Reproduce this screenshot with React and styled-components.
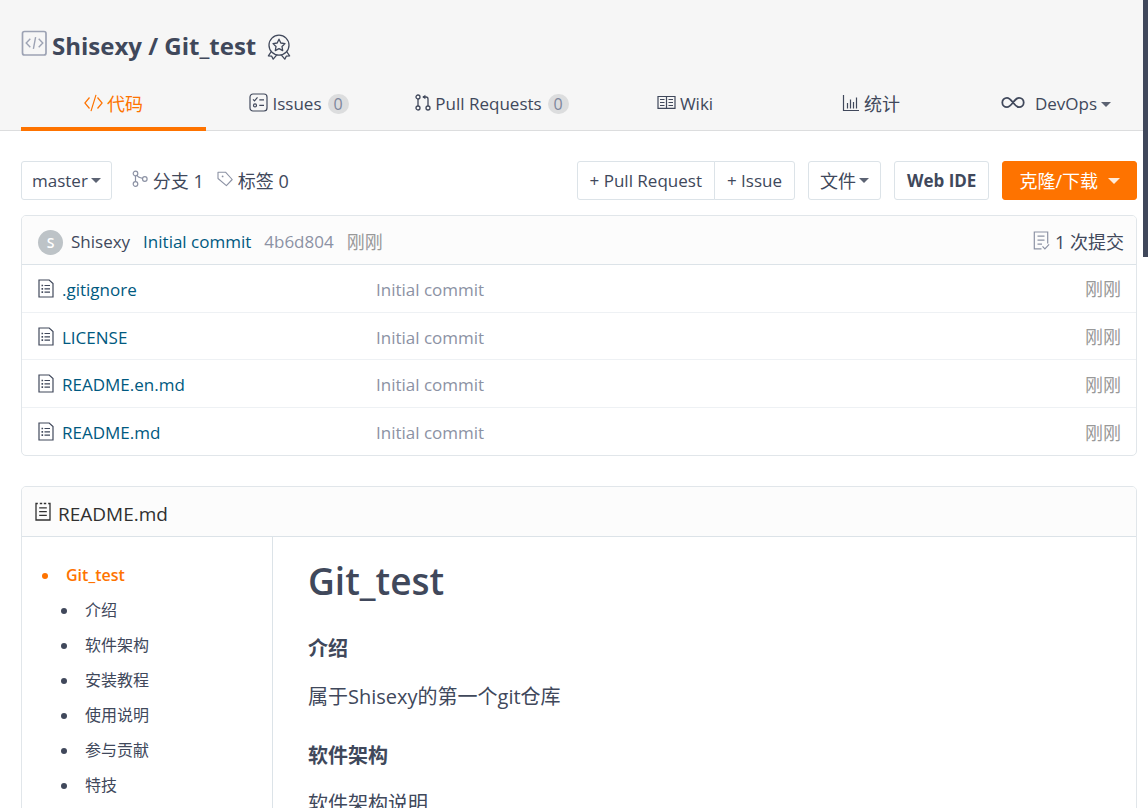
import { styled, createGlobalStyle } from 'styled-components';

const GlobalStyle = createGlobalStyle`
  * {
    box-sizing: border-box;
  }

  html {
    scrollbar-width: none;
  }

  body {
    margin: 0;
    background: #fff;
    color: #40485b;
    font-family: 'Open Sans', 'Noto Sans CJK SC', sans-serif;
    font-size: 17px;
    line-height: 24px;
  }

  a {
    color: inherit;
    text-decoration: none;
  }

  svg {
    display: block;
    flex: none;
    fill: none;
    stroke: currentColor;
  }
`;

const Header = styled.header`
  background: #f6f6f6;
  border-bottom: 1px solid #dcddde;
  padding: 30px 0 0 21px;
`;

const TitleRow = styled.div`
  display: flex;
  align-items: flex-start;
  gap: 5px;
  height: 46px;

  h1 {
    margin: 0 6px 0 0;
    font-size: 24px;
    font-weight: 700;
    line-height: 32px;
  }
`;

const ProjectIcon = styled.span`
  color: #9da3b4;
`;

const Medal = styled.button`
  margin-top: 4px;
  padding: 0;
  border: 0;
  background: none;
  color: #40485b;
`;

const Tabs = styled.nav`
  display: grid;
  grid-template-columns: 185fr 186fr 200fr 186fr 186fr 184fr;
`;

const Tab = styled.a`
  display: flex;
  align-items: center;
  justify-content: center;
  gap: ${({ $gap }) => $gap || 4}px;
  height: ${({ $active }) => ($active ? 55 : 54)}px;
  margin-bottom: ${({ $active }) => ($active ? -1 : 0)}px;
  padding-top: ${({ $active }) => ($active ? 5 : 2)}px;
  border-bottom: ${({ $active }) => ($active ? '4px solid #fe7300' : 'none')};
  color: ${({ $active }) => ($active ? '#fe7300' : 'inherit')};
  font-size: ${({ $cjk }) => ($cjk ? 18 : 17)}px;

  svg {
    margin-bottom: 3px;
  }
`;

const MenuLabel = styled.span`
  display: flex;
  align-items: center;
  gap: 4px;
`;

const Count = styled.span`
  min-width: 21px;
  height: 20px;
  margin-left: 2px;
  border-radius: 10px;
  background: #dcddde;
  color: #7d869c;
  font-size: 16px;
  line-height: 20px;
  text-align: center;
`;

const Caret = styled.i`
  border: ${({ $size }) => $size || 5}px solid transparent;
  border-top-color: currentColor;
  border-bottom: 0;
  opacity: 0.85;
`;

const Main = styled.main`
  padding: 30px 11px 0 21px;
`;

const Toolbar = styled.div`
  display: flex;
  align-items: center;
  gap: 13px;
`;

const Button = styled.button`
  display: flex;
  align-items: center;
  justify-content: center;
  gap: ${({ $primary }) => ($primary ? 10 : 3)}px;
  height: 39px;
  padding: 0 ${({ $pad }) => $pad || 12}px;
  border: 1px solid ${({ $primary }) => ($primary ? '#fe7300' : '#dce3e8')};
  border-radius: 3px;
  background: ${({ $primary }) => ($primary ? '#fe7300' : '#fff')};
  color: ${({ $primary }) => ($primary ? '#fff' : '#40485b')};
  font: inherit;
  font-size: ${({ $cjk }) => ($cjk ? 18 : 17)}px;
  font-weight: ${({ $bold }) => ($bold ? 700 : 400)};
  white-space: nowrap;
`;

const ButtonGroup = styled.div`
  display: flex;

  ${Button} + ${Button} {
    margin-left: -1px;
  }

  ${Button}:first-child {
    border-radius: 3px 0 0 3px;
  }

  ${Button}:last-child {
    border-radius: 0 3px 3px 0;
  }
`;

const RefLinks = styled.div`
  display: flex;
  gap: 13px;
  margin: 0 auto 0 7px;
  font-size: 18px;

  a {
    display: flex;
    align-items: center;
    gap: 5px;
  }

  svg {
    margin-bottom: 3px;
    color: #8c92a4;
  }
`;

const Panel = styled.section`
  margin-top: ${({ $top }) => $top}px;
  border: 1px solid #e1e6ea;
  border-radius: 5px;
  overflow: hidden;
`;

const CommitBar = styled.div`
  display: flex;
  align-items: center;
  gap: 13px;
  height: 49px;
  padding: 4px 12px 0 16px;
  background: #fcfcfc;
  border-bottom: 1px solid #dce3e8;
`;

const Author = styled.a`
  display: flex;
  align-items: center;
  gap: 8px;
`;

const Avatar = styled.span`
  width: 25px;
  height: 25px;
  border-radius: 50%;
  background: #bdc3c7;
  color: #fff;
  font-size: 14px;
  font-weight: 600;
  line-height: 25px;
  text-align: center;
`;

const CommitLink = styled.a`
  color: ${({ $muted }) => ($muted ? '#8c92a4' : '#005980')};
`;

const Time = styled.span`
  color: #999;
  font-size: 18px;
`;

const CommitCount = styled.a`
  display: flex;
  align-items: center;
  gap: 5px;
  margin-left: auto;
  font-size: 18px;

  svg {
    margin-bottom: 4px;
    color: #8c92a4;
  }
`;

const FileTable = styled.table`
  width: 100%;
  height: 190px;
  border-collapse: collapse;

  td {
    padding: 3px 15px 0 0;
    color: #8c92a4;
  }

  td:first-child {
    width: 354px;
    padding-left: 16px;
  }

  td:last-child {
    text-align: right;
  }

  tr + tr td {
    border-top: 1px solid #eef1f4;
  }
`;

const FileLink = styled.a`
  display: flex;
  align-items: center;
  gap: 8px;
  color: #005980;

  svg {
    margin-bottom: 3px;
    color: #40485b;
  }
`;

const ReadmeHead = styled.div`
  display: flex;
  align-items: center;
  gap: 7px;
  height: 50px;
  padding: 4px 13px 0;
  background: #fcfcfc;
  border-bottom: 1px solid #dce3e8;
  color: #303030;
  font-size: 19px;

  svg {
    margin-bottom: 4px;
  }
`;

const ReadmeBody = styled.div`
  display: flex;
`;

const Toc = styled.ul`
  width: 251px;
  margin: 0;
  padding: 21px 0 22px 44px;
  border-right: 1px solid #dce3e8;
  color: #fe7300;
  font-size: 16px;
  line-height: 35px;

  > li > a {
    font-weight: 600;
  }

  ul {
    margin: 0;
    padding-left: 19px;
    color: #40485b;
  }

  li {
    list-style: none;
  }

  a {
    display: flex;
    align-items: center;
    gap: 18px;
    margin-left: -24px;
  }

  a::before {
    content: '';
    width: 6px;
    height: 6px;
    border-radius: 50%;
    background: currentColor;
  }
`;

const Article = styled.article`
  flex: 1;
  padding: 18px 35px 30px;
  font-size: 20px;
  line-height: 32px;

  h1 {
    margin: 0 0 26px;
    font-size: 37px;
    font-weight: 600;
    line-height: 52px;
  }

  h4 {
    margin: 0 0 16px;
    font-size: 20px;
    font-weight: 700;
  }

  p {
    margin: 0 0 27px;
  }
`;

const SideDock = styled.aside`
  position: fixed;
  top: 0;
  right: 0;
  width: 5px;
  height: 257px;
  background: #40485b;
`;

function ProjectGlyph() {
  return (
    <svg width="26" height="26" viewBox="0 0 26 26" strokeWidth="1.7">
      <rect x="1.5" y="1.5" width="23.5" height="23.5" rx="2" />
      <path d="M9.3 8.7 5.2 13l4.1 4.3M17.7 8.7l4.1 4.3-4.1 4.3M14.6 7.2l-2.2 11.6" strokeWidth="1.4" />
    </svg>
  );
}

function MedalGlyph() {
  return (
    <svg width="24" height="27" viewBox="0 0 24 27" strokeWidth="1.3" strokeLinejoin="round">
      <circle cx="12" cy="11.2" r="10" />
      <path d="m12 5.2 1.8 3.8 4.2.6-3 2.9.7 4.1-3.7-2-3.7 2 .7-4.1-3-2.9 4.2-.6z" />
      <path d="m4 18-2.6 3.9 3.3.3 1.5 2.9 3.4-4M20 18l2.6 3.9-3.3.3-1.5 2.9-3.4-4" />
    </svg>
  );
}

function CodeGlyph() {
  return (
    <svg width="19" height="18" viewBox="0 0 19 18" strokeWidth="1.2">
      <path d="M5.5 3.5.9 9l4.6 5.5M13.5 3.5 18.1 9l-4.6 5.5M12 .8 7 17.2" />
    </svg>
  );
}

function IssuesGlyph() {
  return (
    <svg width="19" height="19" viewBox="0 0 19 19" strokeWidth="1.2">
      <rect x="1" y="1" width="17" height="17" rx="3" />
      <path d="m4 6.3 1.5 1.5 3-3.4M10.3 6.8H15M10.3 12.3H15" />
      <circle cx="6" cy="12.4" r="1.5" />
    </svg>
  );
}

function PullGlyph() {
  return (
    <svg width="16" height="17" viewBox="0 0 16 17" strokeWidth="1.3">
      <circle cx="3" cy="3" r="2" />
      <circle cx="3" cy="14" r="2" />
      <circle cx="13" cy="14" r="2" />
      <path d="M3 5v7M13 12V5q0-2-2-2H8" />
      <path d="M10.4.8v4.4L7.2 3z" fill="currentColor" stroke="none" />
    </svg>
  );
}

function WikiGlyph() {
  return (
    <svg width="19" height="15" viewBox="0 0 19 15" strokeWidth="1.2">
      <path d="M1 1.5h17v11.8H1zM9.5 1.5v12.6" />
      <path d="M3 4.5h4.5M3 7.5h4.5M3 10.5h4.5M11.5 4.5H16M11.5 7.5H16M11.5 10.5H16" strokeWidth="1" />
    </svg>
  );
}

function StatsGlyph() {
  return (
    <svg width="18" height="18" viewBox="0 0 18 18" strokeWidth="1.2">
      <path d="M1.5 1v15.5H17M5.5 9v5.5M8.5 5.5v9M11.5 8v6.5M14.5 3.5v11" />
    </svg>
  );
}

function InfinityGlyph() {
  return (
    <svg width="24" height="13" viewBox="0 0 24 13" strokeWidth="1.8">
      <path d="M12 6.5C9.6 3.4 8.2 1.8 6 1.8a4.7 4.7 0 0 0 0 9.4c2.2 0 3.6-1.6 6-4.7s3.8-4.7 6-4.7a4.7 4.7 0 0 1 0 9.4c-2.2 0-3.6-1.6-6-4.7z" />
    </svg>
  );
}

function BranchGlyph() {
  return (
    <svg width="16" height="18" viewBox="0 0 16 18" strokeWidth="1.2">
      <circle cx="3.5" cy="3.5" r="2.3" />
      <circle cx="3.5" cy="14" r="2.3" />
      <circle cx="12.8" cy="9" r="2.3" />
      <path d="M3.5 5.8v5.9M5 5.3c1 2 3 2.6 5.6 3" />
    </svg>
  );
}

function TagGlyph() {
  return (
    <svg width="16" height="16" viewBox="0 0 16 16" strokeWidth="1.1" strokeLinejoin="round">
      <path d="M1 1.2h7.5l6.7 7.3-5.8 6.2L1 7.5z" />
      <circle cx="5.6" cy="5.4" r=".9" fill="currentColor" stroke="none" />
    </svg>
  );
}

function CommitsGlyph() {
  return (
    <svg width="17" height="19" viewBox="0 0 17 19" strokeWidth="1.2">
      <path d="M8.5 17.8H1.3V1h13.4v11.5M4.5 5.2h7M4.5 9.2h7M4.5 13.2h4.5M9.5 15.3l2.4 2.5 4.2-4.4" />
    </svg>
  );
}

function FileGlyph() {
  return (
    <svg width="16" height="19" viewBox="0 0 16 19" strokeWidth="1.2">
      <path d="M1 1h10.2L15 4.6V18H1z" />
      <path d="M6.5 6.5H12M6.5 9.8H12M6.5 13.1H12" />
      <path d="M3.5 6.5h1.6M3.5 9.8h1.6M3.5 13.1h1.6" strokeWidth="1.7" />
    </svg>
  );
}

function ReadmeGlyph() {
  return (
    <svg width="16" height="19" viewBox="0 0 16 19" strokeWidth="1.3">
      <path d="M2.8 1.5H1V18h14V1.5h-1.8M4.8 1.5h2.4M8.8 1.5h2.4M4.2 5.8h7.6M4.2 9.6h7.6M4.2 13.4h7.6" />
    </svg>
  );
}

const files = ['.gitignore', 'LICENSE', 'README.en.md', 'README.md'];

const chapters = ['介绍', '软件架构', '安装教程', '使用说明', '参与贡献', '特技'];

export default function App() {
  return (
    <>
      <GlobalStyle />
      <Header>
        <TitleRow>
          <ProjectIcon>
            <ProjectGlyph />
          </ProjectIcon>
          <h1>
            <a href="#owner">Shisexy</a> / <a href="#repo">Git_test</a>
          </h1>
          <Medal type="button" aria-label="Medal">
            <MedalGlyph />
          </Medal>
        </TitleRow>
        <Tabs>
          <Tab href="#code" $active $cjk>
            <CodeGlyph />
            代码
          </Tab>
          <Tab href="#issues">
            <IssuesGlyph />
            Issues
            <Count>0</Count>
          </Tab>
          <Tab href="#pulls">
            <PullGlyph />
            Pull Requests
            <Count>0</Count>
          </Tab>
          <Tab href="#wiki">
            <WikiGlyph />
            Wiki
          </Tab>
          <Tab href="#stats" $cjk>
            <StatsGlyph />
            统计
          </Tab>
          <Tab href="#devops" $gap={10}>
            <InfinityGlyph />
            <MenuLabel>
              DevOps
              <Caret />
            </MenuLabel>
          </Tab>
        </Tabs>
      </Header>

      <Main>
        <Toolbar>
          <Button type="button" $pad={10}>
            master
            <Caret />
          </Button>
          <RefLinks>
            <a href="#branches">
              <BranchGlyph />
              分支 1
            </a>
            <a href="#tags">
              <TagGlyph />
              标签 0
            </a>
          </RefLinks>
          <ButtonGroup>
            <Button type="button">+ Pull Request</Button>
            <Button type="button">+ Issue</Button>
          </ButtonGroup>
          <Button type="button" $pad={11} $cjk>
            文件
            <Caret />
          </Button>
          <Button type="button" $bold>
            Web IDE
          </Button>
          <Button type="button" $pad={16} $primary $cjk>
            克隆/下载
            <Caret $size={6} />
          </Button>
        </Toolbar>

        <Panel $top={15}>
          <CommitBar>
            <Author href="#author">
              <Avatar>S</Avatar>
              Shisexy
            </Author>
            <CommitLink href="#commit">Initial commit</CommitLink>
            <CommitLink href="#sha" $muted>
              4b6d804
            </CommitLink>
            <Time>刚刚</Time>
            <CommitCount href="#commits">
              <CommitsGlyph />
              1 次提交
            </CommitCount>
          </CommitBar>
          <FileTable>
            <tbody>
              {files.map((file) => (
                <tr key={file}>
                  <td>
                    <FileLink href={`#${file}`}>
                      <FileGlyph />
                      {file}
                    </FileLink>
                  </td>
                  <td>Initial commit</td>
                  <td>
                    <Time>刚刚</Time>
                  </td>
                </tr>
              ))}
            </tbody>
          </FileTable>
        </Panel>

        <Panel $top={30}>
          <ReadmeHead>
            <ReadmeGlyph />
            README.md
          </ReadmeHead>
          <ReadmeBody>
            <Toc>
              <li>
                <a href="#top">Git_test</a>
                <ul>
                  {chapters.map((chapter) => (
                    <li key={chapter}>
                      <a href={`#${chapter}`}>{chapter}</a>
                    </li>
                  ))}
                </ul>
              </li>
            </Toc>
            <Article>
              <h1>Git_test</h1>
              <h4>介绍</h4>
              <p>属于Shisexy的第一个git仓库</p>
              <h4>软件架构</h4>
              <p>软件架构说明</p>
            </Article>
          </ReadmeBody>
        </Panel>
      </Main>

      <SideDock />
    </>
  );
}
